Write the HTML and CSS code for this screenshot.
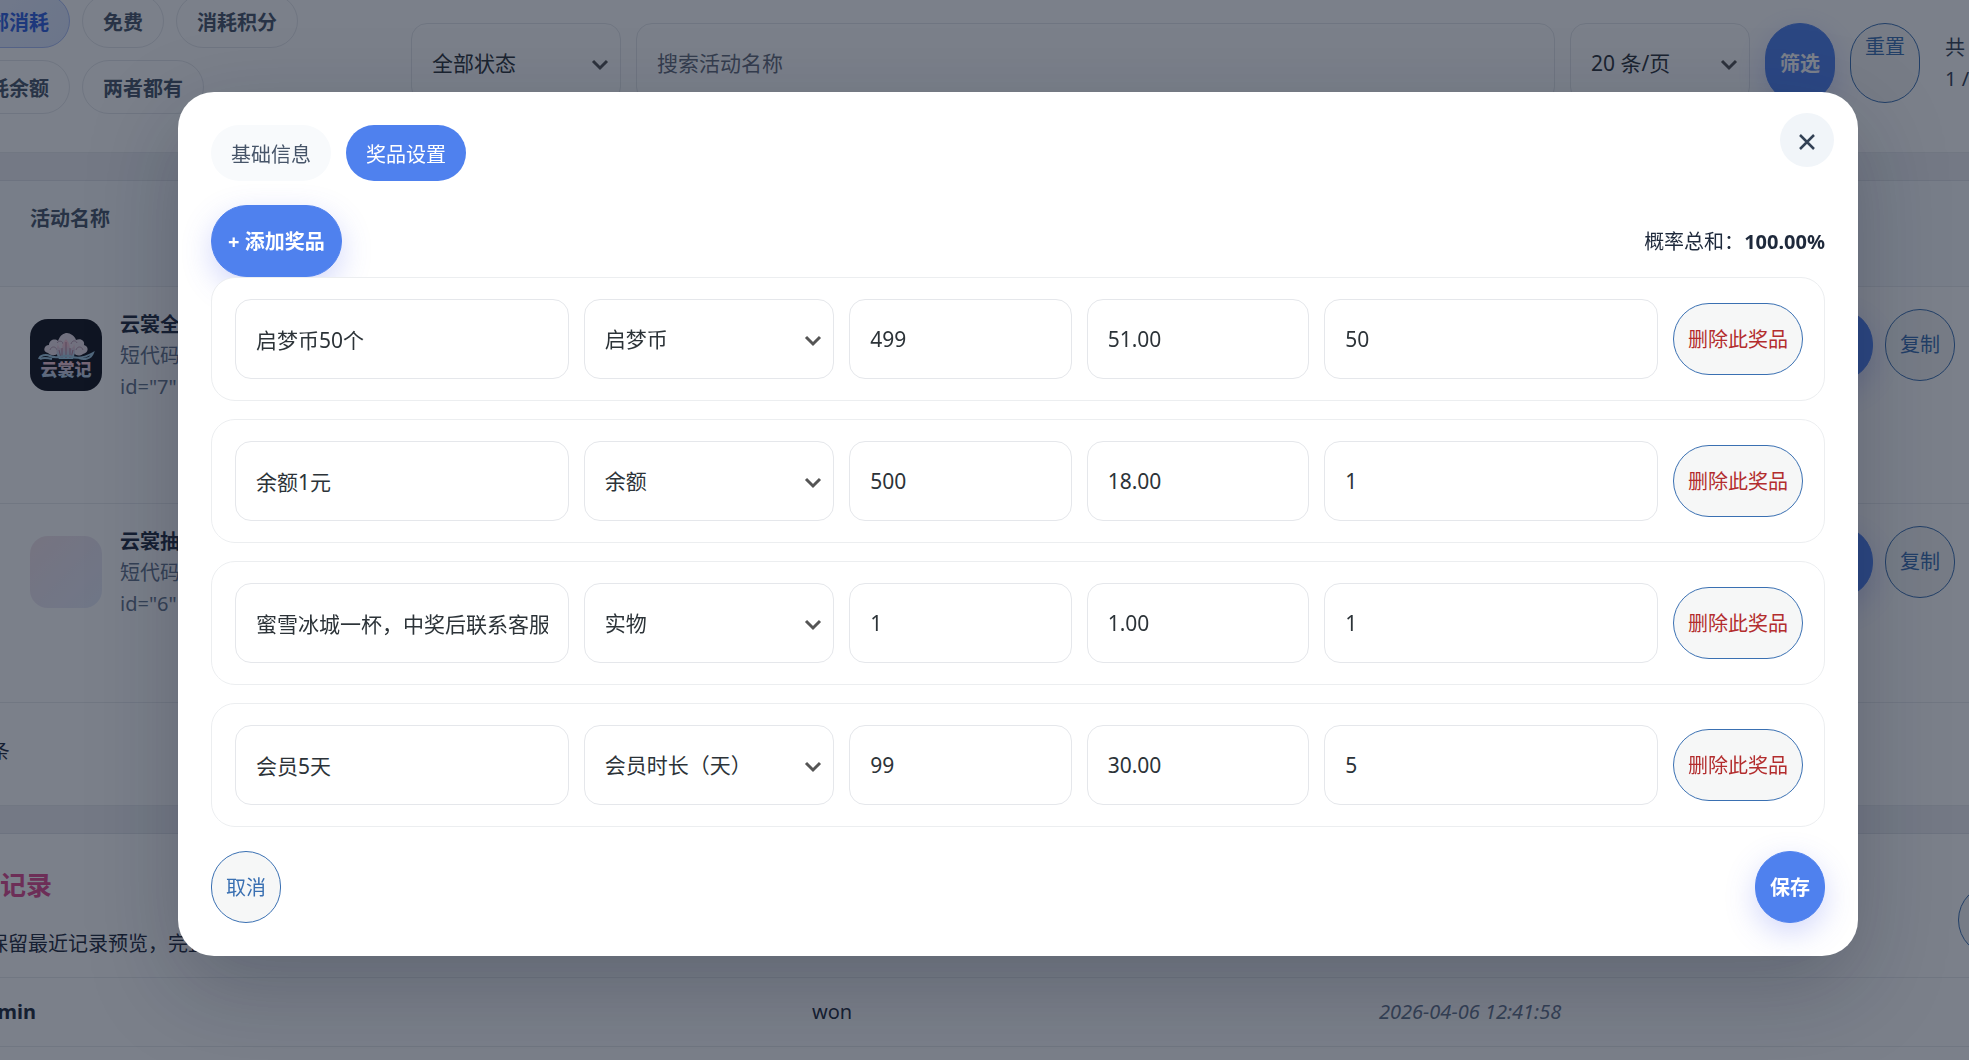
FILE: index.html
```html
<!DOCTYPE html>
<html lang="zh-CN">
<head>
    <meta charset="UTF-8">
    <meta name="viewport" content="width=device-width, initial-scale=1.0">
    <title>奖品设置</title>
    <link rel="stylesheet" href="styles.css">
</head>
<body>
    <main class="page">
        <section class="panel toolbar">
            <div class="pills">
                <button type="button" class="pill active">全部消耗</button>
                <button type="button" class="pill">免费</button>
                <button type="button" class="pill">消耗积分</button>
                <button type="button" class="pill">消耗余额</button>
                <button type="button" class="pill">两者都有</button>
            </div>
            <form class="filters">
                <select class="field" aria-label="状态"><option>全部状态</option></select>
                <input class="field" type="text" placeholder="搜索活动名称" aria-label="搜索活动名称">
                <select class="field" aria-label="每页条数"><option>20 条/页</option></select>
                <button type="button" class="btn primary">筛选</button>
                <a href="#" class="btn reset">重置</a>
            </form>
            <div class="count">共 2 条<br>1 / 1</div>
        </section>

        <section class="panel">
            <table class="activities">
                <thead>
                    <tr>
                        <th class="col-id"></th>
                        <th>活动名称</th>
                        <th class="col-actions"></th>
                    </tr>
                </thead>
                <tbody>
                    <tr class="row-tall">
                        <td></td>
                        <td>
                            <div class="activity">
                                <svg class="thumb" viewBox="0 0 72 72" aria-hidden="true">
                                    <defs>
                                        <linearGradient id="ink" x1="0" y1="0" x2="0" y2="1">
                                            <stop offset="0.3" stop-color="#f3c3d0"/>
                                            <stop offset="1" stop-color="#9fd4ee"/>
                                        </linearGradient>
                                    </defs>
                                    <rect width="72" height="72" fill="#10121c"/>
                                    <path d="M18 34c-6-1-4-8 1-8 0-5 6-7 9-4 2-6 6-8 9-8s8 3 9 7c5-2 9 1 8 5 5 1 5 8-1 9-4 3-8 1-9-1H28c-2 3-7 3-10 0z" fill="#e9dde6"/>
                                    <path d="M20 31c1-4 6-4 7 0M46 31c1-4 6-4 7 0M27 24c2-3 6-2 6 1M41 25c1-4 5-4 6-1" fill="none" stroke="#b99aae" stroke-width="1"/>
                                    <path d="M36 20c3 3 4 7 4 10 3-1 4-3 4-5 2 6 1 10-1 15H29c-3-5-3-9-1-15 0 2 1 4 4 5 0-3 1-7 4-10z" fill="url(#ink)"/>
                                    <path d="M36 23v16M32 29v10M40 29v10M29 31l2 8M43 31l-2 8" stroke="#b77f97" stroke-width="1" fill="none"/>
                                    <path d="M9 40c1-4 7-5 11-3 8 4 14-2 20 0 6 3 14 2 23-3-2 6-9 7-14 5M10 40c4-2 8-1 12 0" fill="none" stroke="#9fc8df" stroke-width="2"/>
                                    <text class="logo-text" x="36" y="57" text-anchor="middle" fill="url(#ink)">云裳记</text>
                                </svg>
                                <div class="activity-text">
                                    <strong>云裳全民抽奖</strong>
                                    <span>短代码</span>
                                    <span>id="7"</span>
                                </div>
                            </div>
                        </td>
                        <td>
                            <div class="actions">
                                <button type="button" class="btn primary">编辑</button>
                                <button type="button" class="btn">复制</button>
                            </div>
                        </td>
                    </tr>
                    <tr>
                        <td></td>
                        <td>
                            <div class="activity">
                                <div class="thumb thumb-empty"></div>
                                <div class="activity-text">
                                    <strong>云裳抽奖</strong>
                                    <span>短代码</span>
                                    <span>id="6"</span>
                                </div>
                            </div>
                        </td>
                        <td>
                            <div class="actions">
                                <button type="button" class="btn primary">编辑</button>
                                <button type="button" class="btn">复制</button>
                            </div>
                        </td>
                    </tr>
                </tbody>
            </table>
            <div class="table-foot">共 2 条</div>
        </section>

        <section class="panel records">
            <header class="records-head">
                <div>
                    <h2>抽奖记录</h2>
                    <p>这里保留最近记录预览，完整</p>
                </div>
                <a href="#" class="btn records-link">打开记录页</a>
            </header>
            <div class="record">
                <strong>admin</strong>
                <span>won</span>
                <em>2026-04-06 12:41:58</em>
            </div>
            <div class="record"></div>
        </section>
    </main>

    <div class="overlay">
        <div class="modal" role="dialog" aria-label="奖品设置">
            <button type="button" class="close" aria-label="关闭">
                <svg viewBox="0 0 16 16" aria-hidden="true"><path d="M1 1l14 14M15 1L1 15"/></svg>
            </button>
            <div class="tabs">
                <button type="button" class="tab">基础信息</button>
                <button type="button" class="tab active">奖品设置</button>
            </div>
            <div class="prize-bar">
                <button type="button" class="btn primary add">+ 添加奖品</button>
                <div class="total">概率总和：<strong>100.00%</strong></div>
            </div>
            <div class="prizes">
                <div class="prize">
                    <input class="field" type="text" value="启梦币50个" aria-label="奖品名称">
                    <select class="field" aria-label="奖品类型"><option>启梦币</option></select>
                    <input class="field" type="text" value="499" aria-label="库存">
                    <input class="field" type="text" value="51.00" aria-label="概率">
                    <input class="field" type="text" value="50" aria-label="数值">
                    <button type="button" class="btn danger">删除此奖品</button>
                </div>
                <div class="prize">
                    <input class="field" type="text" value="余额1元" aria-label="奖品名称">
                    <select class="field" aria-label="奖品类型"><option>余额</option></select>
                    <input class="field" type="text" value="500" aria-label="库存">
                    <input class="field" type="text" value="18.00" aria-label="概率">
                    <input class="field" type="text" value="1" aria-label="数值">
                    <button type="button" class="btn danger">删除此奖品</button>
                </div>
                <div class="prize">
                    <input class="field" type="text" value="蜜雪冰城一杯，中奖后联系客服" aria-label="奖品名称">
                    <select class="field" aria-label="奖品类型"><option>实物</option></select>
                    <input class="field" type="text" value="1" aria-label="库存">
                    <input class="field" type="text" value="1.00" aria-label="概率">
                    <input class="field" type="text" value="1" aria-label="数值">
                    <button type="button" class="btn danger">删除此奖品</button>
                </div>
                <div class="prize">
                    <input class="field" type="text" value="会员5天" aria-label="奖品名称">
                    <select class="field" aria-label="奖品类型"><option>会员时长（天）</option></select>
                    <input class="field" type="text" value="99" aria-label="库存">
                    <input class="field" type="text" value="30.00" aria-label="概率">
                    <input class="field" type="text" value="5" aria-label="数值">
                    <button type="button" class="btn danger">删除此奖品</button>
                </div>
            </div>
            <div class="modal-foot">
                <button type="button" class="btn">取消</button>
                <button type="button" class="btn primary">保存</button>
            </div>
        </div>
    </div>
</body>
</html>
```
FILE: styles.css
```css
* { box-sizing: border-box; }
body {
    margin: 0;
    height: 100vh;
    overflow: hidden;
    background: #eff0f4;
    color: #1e293b;
    font-family: "Noto Sans", "Noto Sans CJK SC", sans-serif;
    font-size: 20px;
    line-height: 31px;
}
button, input, select { font-family: inherit; margin: 0; }
h2, p { margin: 0; }

/* controls */
.field {
    width: 100%;
    height: 80px;
    padding: 0 20px;
    border: 1px solid #e5e7eb;
    border-radius: 16px;
    background-color: #fff;
    color: #2c3338;
    font-size: 21px;
    outline: none;
}
.field::placeholder { color: #646b7a; }
select.field {
    appearance: none;
    background-image: url("data:image/svg+xml,%3Csvg xmlns='http://www.w3.org/2000/svg' viewBox='0 0 20 20'%3E%3Cpath d='M3 8l7 7 7-7' fill='none' stroke='%23555' stroke-width='3'/%3E%3C/svg%3E");
    background-repeat: no-repeat;
    background-position: right 10px center;
    background-size: 20px 20px;
}
.btn {
    flex-shrink: 0;
    min-height: 72px;
    padding: 0 14px;
    border: 1px solid #3a70b2;
    border-radius: 36px;
    background: #f6f7f7;
    color: #3a70b2;
    font-size: 20px;
    line-height: 31px;
    text-decoration: none;
    white-space: nowrap;
    cursor: pointer;
}
.btn.primary {
    border-color: #4f81ee;
    background: #4f81ee;
    color: #fff;
    font-weight: 700;
    box-shadow: 0 10px 30px rgba(79, 100, 238, 0.25);
}
.btn.danger { color: #b32d2e; }
.btn.add { padding: 0 16px; }

/* page behind the dialog, wider than the window on both sides */
.page { margin: -24px -148px 0 -81px; }
.panel { background: #fff; border-bottom: 1px solid #e9ebee; margin-bottom: 27px; }
.panel + .panel { border-top: 1px solid #e0e3e8; }
.toolbar { display: flex; align-items: center; padding: 18px 29px 20px; }
.pills { display: flex; flex-wrap: wrap; gap: 12px; width: 448px; margin-bottom: 18px; }
.pill {
    height: 54px;
    padding: 0 20px;
    border: 1px solid #e5e7eb;
    border-radius: 27px;
    background: #fff;
    color: #475569;
    font-size: 20px;
    font-weight: 700;
}
.pill.active { border-color: #a9bdf5; background: linear-gradient(135deg, #eef2ff, #dbe6ff); color: #2f5fe0; }
.filters {
    flex: 1;
    display: grid;
    grid-template-columns: 210px 1fr 180px auto auto;
    gap: 15px;
    margin: 0 15px;
}
.reset { padding-top: 7px; }
.count { width: 153px; padding-left: 10px; color: #334155; }

.activities { width: 100%; border-collapse: collapse; table-layout: fixed; }
.activities th, .activities td { padding: 22px 20px; text-align: left; vertical-align: top; border-bottom: 1px solid #e9ebee; }
.activities th { height: 105px; background: #f8fafc; color: #475569; }
.activities td { height: 199px; }
.activities .row-tall td { height: 217px; }
.activities .col-id { width: 91px; }
.activities .col-actions { width: 334px; }
.activity { display: flex; align-items: center; gap: 18px; }
.thumb { width: 72px; height: 72px; border-radius: 18px; }
.thumb-empty { background: linear-gradient(135deg, #f3e3ea, #e6ebfa); }
.logo-text { font-family: "Noto Sans CJK SC", sans-serif; font-size: 17px; font-weight: 900; }
.activity-text { display: flex; flex-direction: column; color: #64748b; }
.activity-text strong { color: #1e293b; }
.actions { display: flex; gap: 12px; }
.table-foot { padding: 33px 29px 38px; }

.records-head { display: flex; justify-content: space-between; align-items: center; padding: 34px 29px 4px; }
.records h2 { margin-bottom: 26px; color: #e0498f; font-size: 26px; line-height: 34px; }
.records p { margin-bottom: 14px; }
.records-link { min-height: 72px; padding-top: 20px; }
.record {
    display: grid;
    grid-template-columns: 839px 567px 1fr;
    align-items: center;
    height: 69px;
    padding: 0 54px;
    border-top: 1px solid #e9ebee;
}
.record em { color: #64748b; }

/* dialog */
.overlay {
    position: fixed;
    inset: 0;
    display: flex;
    align-items: flex-start;
    padding: 92px 111px 0 178px;
    background: rgba(15, 23, 42, 0.55);
}
.modal {
    position: relative;
    flex: 1;
    padding: 33px;
    border-radius: 36px;
    background: #fff;
    box-shadow: 0 30px 90px rgba(15, 23, 42, 0.25);
}
.close {
    position: absolute;
    top: 21px;
    right: 24px;
    width: 54px;
    height: 54px;
    padding: 8px 0 0;
    border: 0;
    border-radius: 50%;
    background: #f1f5f9;
}
.close svg { width: 16px; height: 16px; fill: none; stroke: #334155; stroke-width: 2.5; overflow: visible; }
.tabs { display: flex; gap: 15px; margin-bottom: 24px; }
.tab {
    height: 56px;
    padding: 0 20px;
    border: 0;
    border-radius: 28px;
    background: #f8fafc;
    color: #475569;
    font-size: 20px;
}
.tab.active { background: #4f81ee; color: #fff; }
.prize-bar { display: flex; justify-content: space-between; align-items: center; }
.prizes { display: grid; gap: 18px; }
.prize {
    display: grid;
    grid-template-columns: 12fr 9fr 8fr 8fr 12fr auto;
    gap: 15px;
    align-items: center;
    padding: 21px;
    padding-left: 23px;
    border: 1px solid #eceef0;
    border-radius: 24px;
    background: #fff;
}
.prize .field { min-width: 0; }
.modal-foot { display: flex; justify-content: space-between; margin-top: 24px; }
```
